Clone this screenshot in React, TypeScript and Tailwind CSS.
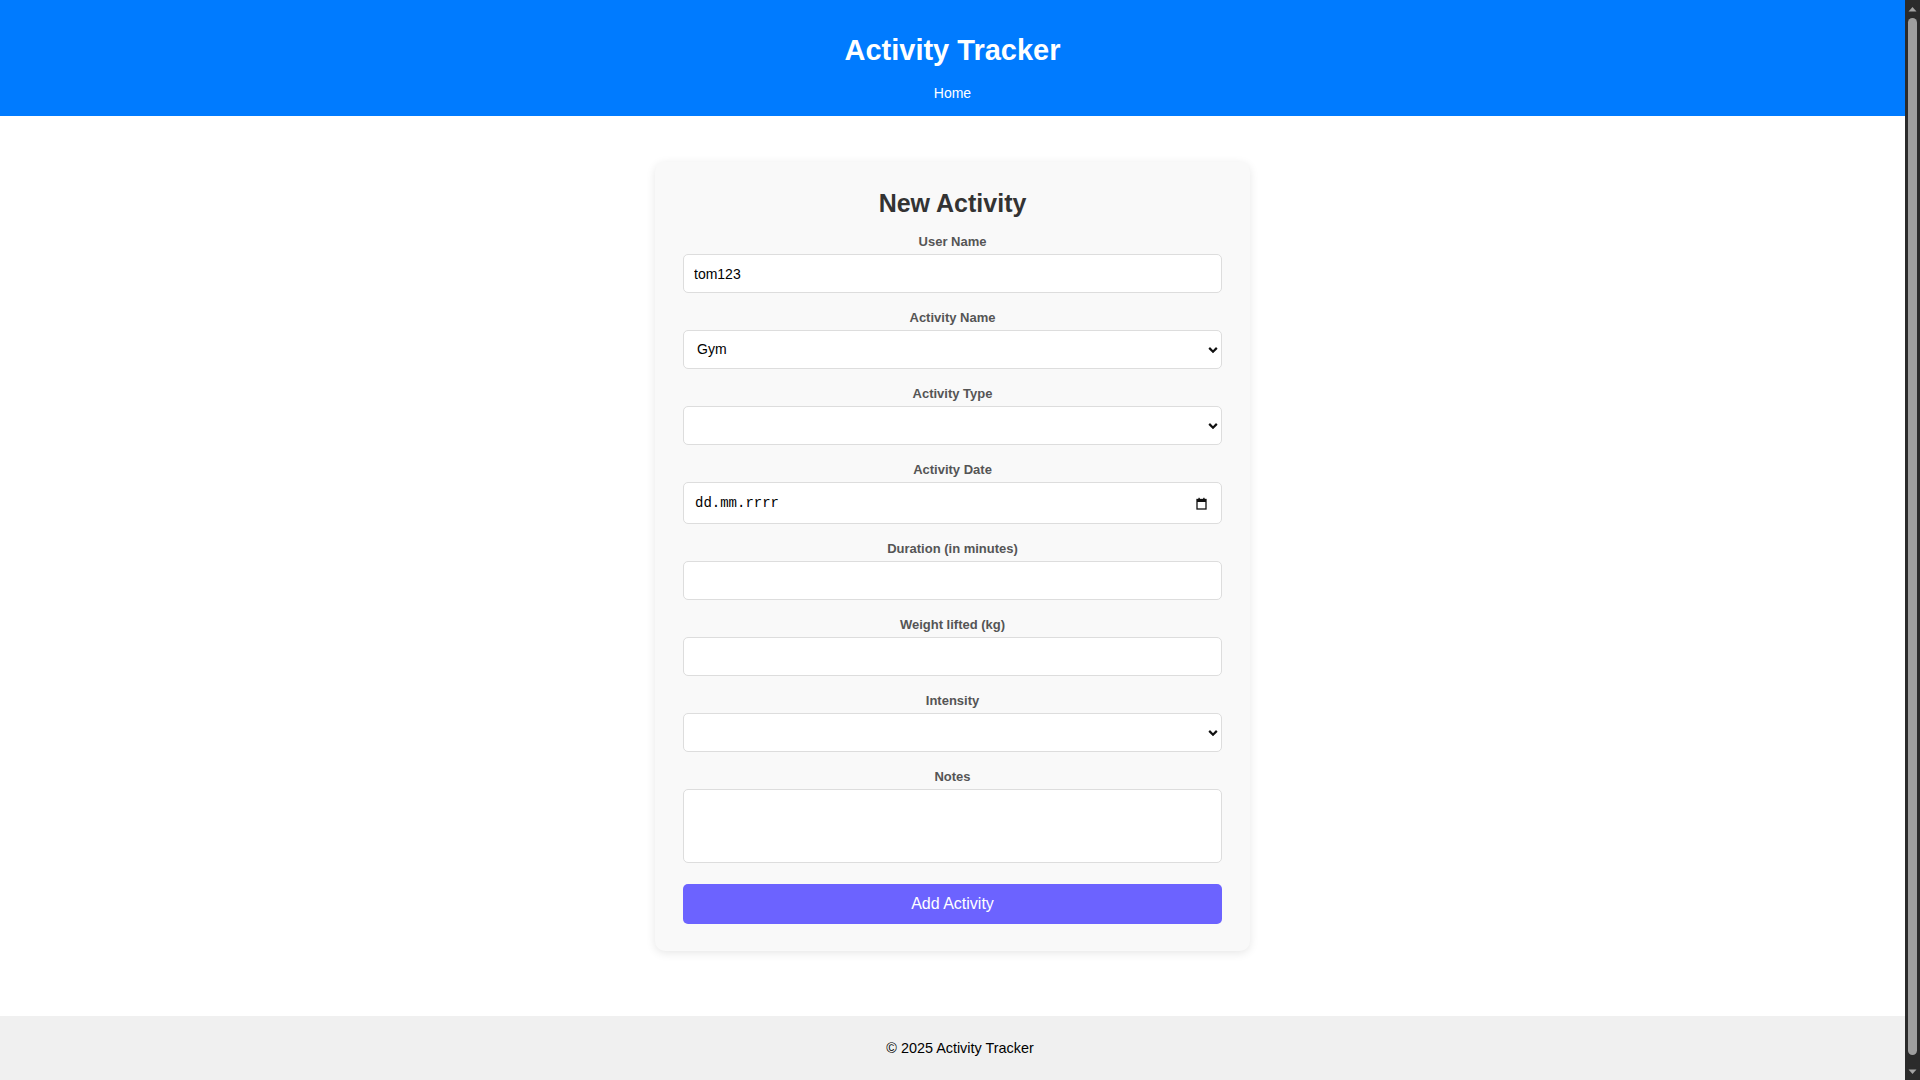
import { useState } from "react";

const labelCls =
  "block text-center text-[13px] leading-[15px] font-bold text-[#555] mb-[5px]";
const inputCls =
  "block w-full h-[39px] px-[10px] bg-white border border-[#ddd] rounded-[5px] text-[14px] text-black outline-none";

function Chevron() {
  return (
    <svg
      width="10"
      height="7"
      viewBox="0 0 10 7"
      className="absolute right-[4px] top-1/2 -translate-y-1/2 pointer-events-none"
    >
      <path d="M1.2 1.4 L5 5.2 L8.8 1.4" fill="none" stroke="#111" strokeWidth="2.2" />
    </svg>
  );
}

function SelectField({
  value,
  onChange,
  options,
}: {
  value: string;
  onChange: (v: string) => void;
  options: string[];
}) {
  return (
    <div className="relative">
      <select
        value={value}
        onChange={(e) => onChange(e.target.value)}
        className={inputCls + " appearance-none pl-[13px] pr-[24px]"}
      >
        {options.map((o) => (
          <option key={o} value={o}>
            {o}
          </option>
        ))}
      </select>
      <Chevron />
    </div>
  );
}

function CalendarIcon() {
  return (
    <svg width="11" height="13" viewBox="0 0 11 13" className="shrink-0">
      <rect x="1" y="2.5" width="9" height="9.5" fill="none" stroke="#111" strokeWidth="1.3" />
      <rect x="1" y="2.5" width="9" height="2.5" fill="#111" />
      <rect x="2.4" y="0.8" width="1.4" height="2" fill="#111" />
      <rect x="7.2" y="0.8" width="1.4" height="2" fill="#111" />
    </svg>
  );
}

// drawn scrollbar, the screenshot browser hides the real one
function Scrollbar() {
  return (
    <div className="w-[15px] shrink-0 bg-[#2b2b2b] flex flex-col items-center">
      <div className="h-[17px] flex items-center justify-center">
        <svg width="9" height="6" viewBox="0 0 9 6">
          <path d="M0.5 5.5 L4.5 1 L8.5 5.5 Z" fill="#a3a3a3" />
        </svg>
      </div>
      <div className="flex-1 w-[9px] mt-[1px] mb-[8px] rounded-full bg-[#9f9f9f]" />
      <div className="h-[17px] flex items-center justify-center">
        <svg width="9" height="6" viewBox="0 0 9 6">
          <path d="M0.5 0.5 L4.5 5 L8.5 0.5 Z" fill="#a3a3a3" />
        </svg>
      </div>
    </div>
  );
}

export default function App() {
  const [user, setUser] = useState("tom123");
  const [activity, setActivity] = useState("Gym");
  const [type, setType] = useState("");
  const [intensity, setIntensity] = useState("");

  return (
    <div className="flex h-screen overflow-hidden bg-white font-['Liberation_Sans',Arial,sans-serif]">
      <div className="flex-1 min-w-0 flex flex-col overflow-hidden">
        <header className="bg-[#007bff] text-white text-center pt-[34px] pb-[15px]">
          <h1 className="text-[29px] leading-[33px] font-bold">Activity Tracker</h1>
          <nav className="mt-[18px] text-[14px] leading-[16px]">
            <a href="#" className="text-white">
              Home
            </a>
          </nav>
        </header>

        <main className="flex-1 flex justify-center items-start pt-[46px]">
          <div className="w-[595px] bg-[#f9f9f9] rounded-[10px] px-[28px] pt-[27px] pb-[27px] shadow-[0_2px_10px_rgba(0,0,0,0.1)]">
            <h2 className="text-center text-[25px] leading-[29px] font-bold text-[#333] mb-[16px]">
              New Activity
            </h2>

            <form onSubmit={(e) => e.preventDefault()}>
              <div className="mb-[17px]">
                <label className={labelCls}>User Name</label>
                <input
                  value={user}
                  onChange={(e) => setUser(e.target.value)}
                  className={inputCls}
                />
              </div>

              <div className="mb-[17px]">
                <label className={labelCls}>Activity Name</label>
                <SelectField
                  value={activity}
                  onChange={setActivity}
                  options={["Gym", "Running", "Cycling", "Swimming"]}
                />
              </div>

              <div className="mb-[17px]">
                <label className={labelCls}>Activity Type</label>
                <SelectField
                  value={type}
                  onChange={setType}
                  options={["", "Strength", "Cardio"]}
                />
              </div>

              <div className="mb-[17px]">
                <label className={labelCls}>Activity Date</label>
                <div className="flex items-center justify-between h-[42px] pl-[11px] pr-[14px] bg-white border border-[#ddd] rounded-[5px]">
                  <span className="font-['Liberation_Mono',monospace] text-[14px] text-black">
                    dd.mm.rrrr
                  </span>
                  <CalendarIcon />
                </div>
              </div>

              <div className="mb-[17px]">
                <label className={labelCls}>Duration (in minutes)</label>
                <input type="number" className={inputCls} />
              </div>

              <div className="mb-[17px]">
                <label className={labelCls}>Weight lifted (kg)</label>
                <input type="number" className={inputCls} />
              </div>

              <div className="mb-[17px]">
                <label className={labelCls}>Intensity</label>
                <SelectField
                  value={intensity}
                  onChange={setIntensity}
                  options={["", "Low", "Medium", "High"]}
                />
              </div>

              <div className="mb-[21px]">
                <label className={labelCls}>Notes</label>
                <textarea className="block w-full h-[74px] p-[10px] bg-white border border-[#ddd] rounded-[5px] text-[14px] resize-none outline-none" />
              </div>

              <button
                type="submit"
                className="block w-full h-[40px] bg-[#6c63ff] text-white text-[16px] rounded-[5px]"
              >
                Add Activity
              </button>
            </form>
          </div>
        </main>

        <footer className="h-[64px] shrink-0 flex items-center justify-center pl-[15px] bg-[#f0f0f0] text-black text-[14.4px] leading-[16px]">
          © 2025 Activity Tracker
        </footer>
      </div>
      <Scrollbar />
    </div>
  );
}
